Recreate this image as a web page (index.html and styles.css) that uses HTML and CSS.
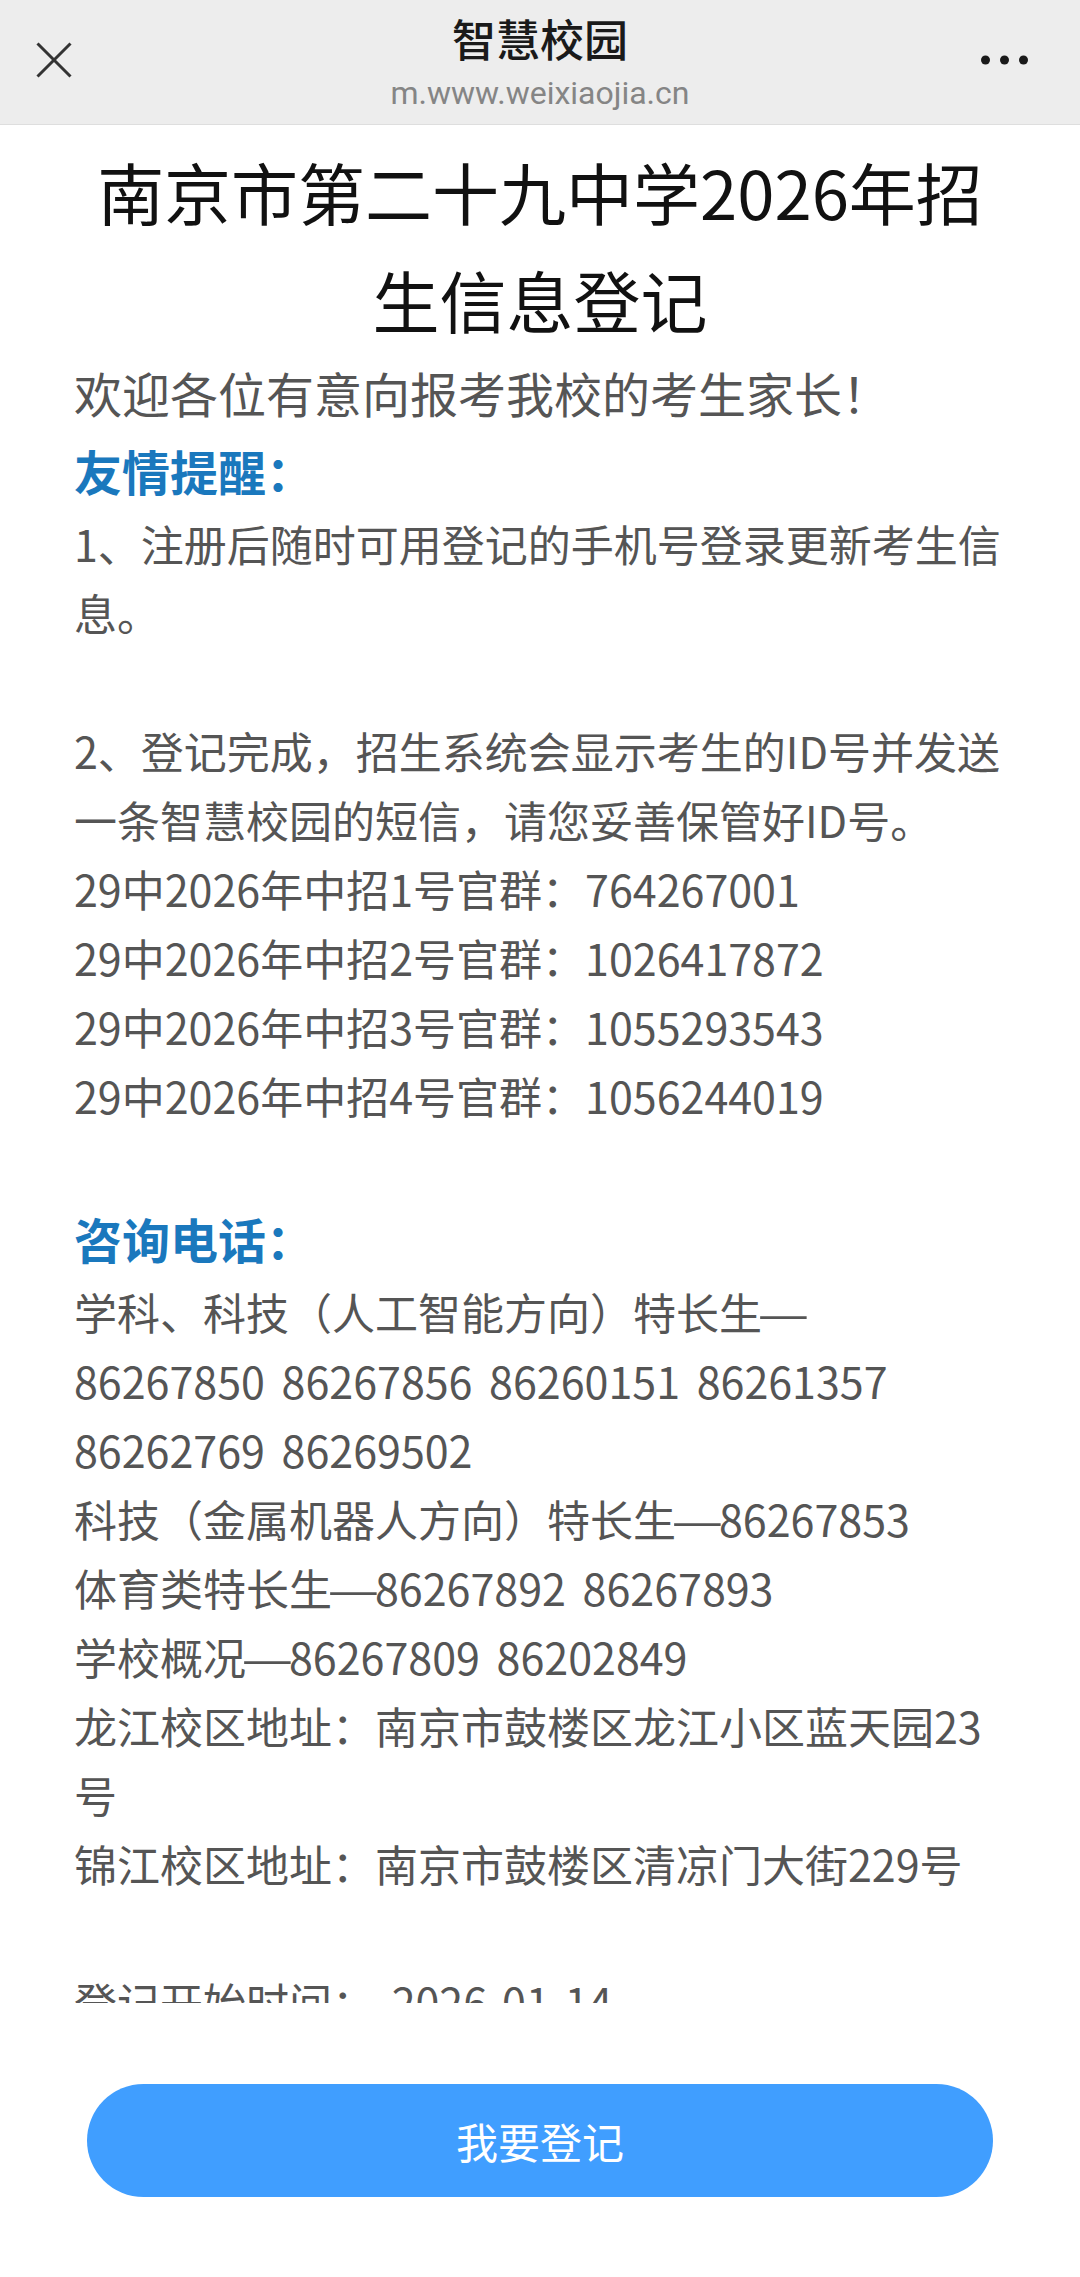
FILE: index.html
```html
<!DOCTYPE html>
<html lang="zh-CN">
<head>
    <meta charset="UTF-8">
    <meta name="viewport" content="width=device-width, initial-scale=1.0">
    <title>智慧校园</title>
    <link rel="stylesheet" href="styles.css">
</head>
<body>
    <div class="app">
        <header class="navbar">
            <span class="nav-close">
                <svg width="36" height="36" viewBox="0 0 36 36">
                    <line x1="1.5" y1="1.5" x2="34.5" y2="34.5" />
                    <line x1="34.5" y1="1.5" x2="1.5" y2="34.5" />
                </svg>
            </span>
            <div class="nav-title">
                <div class="nav-name">智慧校园</div>
                <div class="nav-url">m.www.weixiaojia.cn</div>
            </div>
            <span class="nav-more">
                <svg width="47" height="10" viewBox="0 0 47 10">
                    <circle cx="4.5" cy="5" r="4.5" />
                    <circle cx="23.5" cy="5" r="4.5" />
                    <circle cx="42.5" cy="5" r="4.5" />
                </svg>
            </span>
        </header>

        <main class="content">
            <h1 class="title">南京市第二十九中学2026年招生信息登记</h1>
            <p class="welcome">欢迎各位有意向报考我校的考生家长！</p>

            <p class="label">友情提醒：</p>
            <p class="text">
                1、注册后随时可用登记的手机号登录更新考生信息。<br><br>
                2、登记完成，招生系统会显示考生的ID号并发送一条智慧校园的短信，请您妥善保管好ID号。<br>
                29中2026年中招1号官群：764267001<br>
                29中2026年中招2号官群：1026417872<br>
                29中2026年中招3号官群：1055293543<br>
                29中2026年中招4号官群：1056244019<br><br>
            </p>

            <p class="label">咨询电话：</p>
            <p class="text">
                学科、科技（人工智能方向）特长生<span class="dash">—</span><br>
                86267850 86267856 86260151 86261357 86262769 86269502<br>
                科技（金属机器人方向）特长生<span class="dash">—</span>86267853<br>
                体育类特长生<span class="dash">—</span>86267892 86267893<br>
                学校概况<span class="dash">—</span>86267809 86202849<br>
                龙江校区地址：南京市鼓楼区龙江小区蓝天园23号<br>
                锦江校区地址：南京市鼓楼区清凉门大街229号<br><br>
                登记开始时间： 2026-01-14
            </p>
        </main>

        <footer class="bottom">
            <button class="btn-register">我要登记</button>
        </footer>
    </div>
</body>
</html>
```

FILE: styles.css
```css
* {
    box-sizing: border-box;
}
body {
    margin: 0;
    font-family: "Noto Sans CJK SC", "Noto Sans", sans-serif;
    background-color: #fff;
}
.app {
    display: flex;
    flex-direction: column;
    height: 100vh;
}
.navbar {
    flex: none;
    height: 125px;
    display: grid;
    grid-template-columns: 1fr auto 1fr;
    align-items: start;
    padding: 0 36px;
    background-color: #ededed;
    border-bottom: 1px solid #dedede;
}
.nav-close {
    justify-self: start;
    margin-top: 42px;
    height: 36px;
}
.nav-close svg {
    display: block;
    stroke: #333;
    stroke-width: 3;
}
.nav-more {
    justify-self: end;
    margin-top: 55px;
    margin-right: 16px;
}
.nav-more svg {
    display: block;
    fill: #1a1a1a;
}
.nav-title {
    padding-top: 12px;
    text-align: center;
}
.nav-name {
    font-size: 44px;
    line-height: 52px;
    font-weight: 500;
    color: #1a1a1a;
}
.nav-url {
    margin-top: 9px;
    font-family: Roboto, "Noto Sans", sans-serif;
    font-size: 32px;
    line-height: 40px;
    color: #858585;
}
.content {
    flex: 1;
    overflow: hidden;
    padding: 12px 74px 0;
}
.title {
    margin: 0;
    font-size: 67px;
    line-height: 108px;
    font-weight: 400;
    color: #111;
    text-align: center;
}
.welcome {
    margin: 0;
    font-size: 48px;
    line-height: 78px;
    color: #555;
}
.label {
    margin: 0;
    font-size: 48px;
    line-height: 78px;
    font-weight: bold;
    color: #1a78bd;
}
.text {
    margin: 0;
    font-size: 43px;
    line-height: 69px;
    color: #555;
    word-spacing: 7px;
}
.dash {
    display: inline-block;
    width: 1em;
    text-align: center;
    transform: scaleX(1.35);
}
.bottom {
    flex: none;
    height: 274px;
    display: flex;
    align-items: center;
    justify-content: center;
    background-color: #fff;
}
.btn-register {
    width: 906px;
    height: 113px;
    border: none;
    border-radius: 57px;
    background-color: #409eff;
    color: #fff;
    font-family: "Noto Sans CJK SC", sans-serif;
    font-size: 42px;
    cursor: pointer;
}
```
